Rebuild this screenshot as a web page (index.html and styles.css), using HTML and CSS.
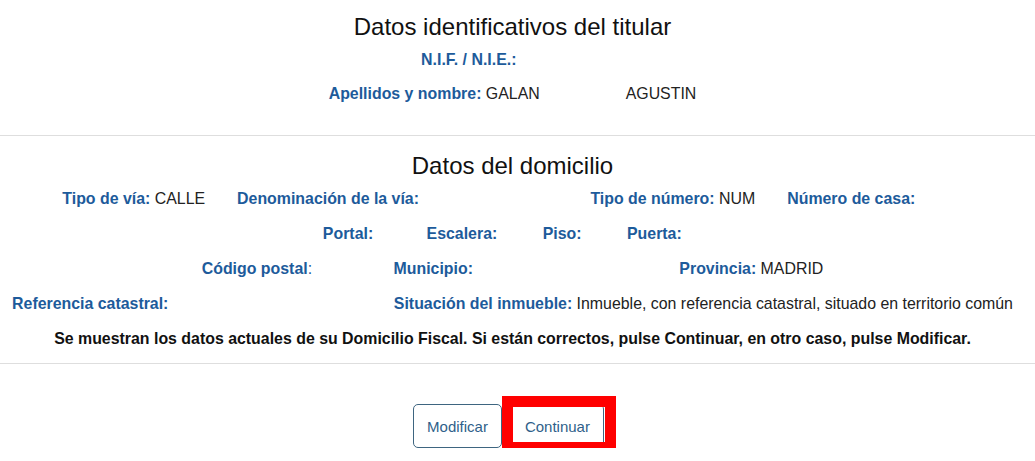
FILE: index.html
```html
<!DOCTYPE html>
<html lang="es">
<head>
    <meta charset="UTF-8">
    <meta name="viewport" content="width=device-width, initial-scale=1.0">
    <title>Domicilio fiscal</title>
    <link rel="stylesheet" href="styles.css">
</head>
<body>
    <section class="block block-titular">
        <h2>Datos identificativos del titular</h2>
        <div class="row">
            <span class="field"><b>N.I.F. / N.I.E.:</b> <span class="hidden w-nif"></span></span>
        </div>
        <div class="row">
            <span class="field"><b>Apellidos y nombre:</b> GALAN <span class="hidden w-surname"></span> AGUSTIN</span>
        </div>
    </section>

    <section class="block block-domicilio">
        <h2>Datos del domicilio</h2>
        <div class="row">
            <span class="field"><b>Tipo de vía:</b> CALLE</span>
            <span class="field"><b>Denominación de la vía:</b> <span class="hidden w-street"></span></span>
            <span class="field"><b>Tipo de número:</b> NUM</span>
            <span class="field"><b>Número de casa:</b> <span class="hidden w-house"></span></span>
        </div>
        <div class="row">
            <span class="field"><b>Portal:</b> <span class="hidden w-portal"></span></span>
            <span class="field"><b>Escalera:</b> <span class="hidden w-stair"></span></span>
            <span class="field"><b>Piso:</b> <span class="hidden w-floor"></span></span>
            <span class="field"><b>Puerta:</b> <span class="hidden w-door"></span></span>
        </div>
        <div class="row">
            <span class="field"><b>Código postal</b><span class="colon">:</span> <span class="hidden w-zip"></span></span>
            <span class="field"><b>Municipio:</b> <span class="hidden w-town"></span></span>
            <span class="field"><b>Provincia:</b> MADRID</span>
        </div>
        <div class="row">
            <span class="field"><b>Referencia catastral:</b> <span class="hidden w-cadastre"></span></span>
            <span class="field"><b>Situación del inmueble:</b> Inmueble, con referencia catastral, situado en territorio común</span>
        </div>
        <p class="notice">Se muestran los datos actuales de su Domicilio Fiscal. Si están correctos, pulse Continuar, en otro caso, pulse Modificar.</p>
    </section>

    <div class="actions">
        <button type="button" class="btn">Modificar</button>
        <span class="highlight">
            <button type="button" class="btn">Continuar</button>
        </span>
    </div>
</body>
</html>
```
FILE: styles.css
```css
body {
    margin: 0;
    font-family: "Liberation Sans", Arial, sans-serif;
    font-size: 15.9px;
    color: #222;
    background: #fff;
}

.block {
    padding-right: 10px;
    border-bottom: 1px solid #dedede;
}
.block-titular {
    padding-top: 12px;
    padding-bottom: 24px;
}
.block-domicilio {
    margin-top: 15px;
    padding-bottom: 7px;
}

h2 {
    margin: 0;
    font-size: 24px;
    font-weight: normal;
    line-height: 30px;
    text-align: center;
    color: #111;
}

.row {
    display: flex;
    justify-content: center;
    align-items: center;
    height: 35px;
    white-space: nowrap;
}
.block-titular h2 {
    margin-bottom: 1px;
}
.block-titular .row {
    height: 34px;
}

.field {
    margin: 0 16px;
}
.field b,
.field .colon {
    color: #1d5b9b;
}
.colon {
    font-weight: normal;
}

/* values that are not shown keep their space */
.hidden {
    display: inline-block;
    height: 1px;
}
.w-nif { width: 83px; }
.w-surname { width: 78px; }
.w-street { width: 135px; }
.w-house { width: 43px; }
.w-portal { width: 17px; }
.w-stair { width: 9px; }
.w-floor { width: 9px; }
.w-door { width: 16px; }
.w-zip { width: 45px; }
.w-town { width: 170px; }
.w-cadastre { width: 189px; }

.notice {
    margin: 0;
    height: 35px;
    line-height: 35px;
    text-align: center;
    font-weight: bold;
    color: #111;
}

.actions {
    display: flex;
    justify-content: center;
    gap: 9px;
    margin-top: 40px;
    padding-right: 18px;
}
.btn {
    height: 44px;
    padding: 0 13px;
    font-family: inherit;
    font-size: 15px;
    color: #2f5f8a;
    background: #fff;
    border: 1px solid #3e6580;
    border-radius: 5px;
    cursor: pointer;
}
.highlight {
    position: relative;
    display: flex;
}
.highlight::after {
    content: "";
    position: absolute;
    top: -8px;
    bottom: -5px;
    left: -9px;
    right: -12px;
    border: 11px solid #f00;
    pointer-events: none;
}
```
